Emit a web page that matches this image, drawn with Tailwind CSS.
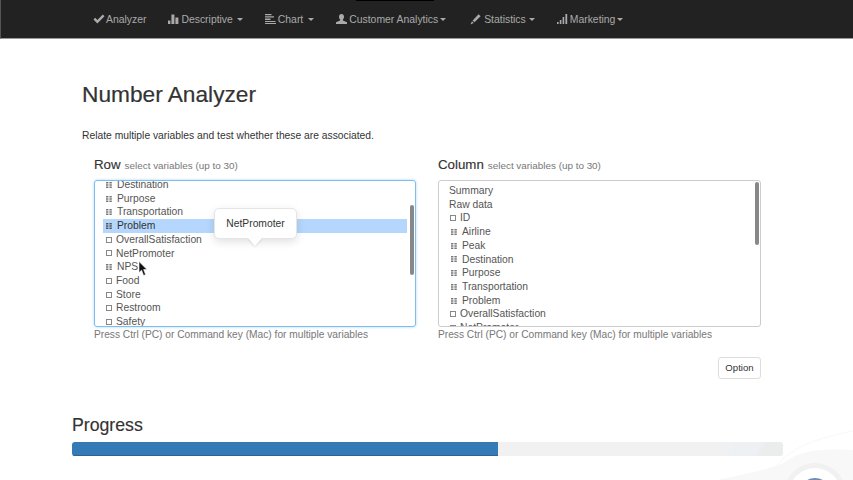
<!DOCTYPE html>
<html lang="en">
<head>
<meta charset="UTF-8">
<title>Number Analyzer</title>
<script src="https://cdn.jsdelivr.net/npm/@tailwindcss/browser@4"></script>
</head>
<body class="relative w-[853px] h-[480px] overflow-hidden bg-white font-['Liberation_Sans',Arial,sans-serif] text-[10.3px] text-[#555]">

<!-- top nav -->
<nav class="relative flex items-center gap-[22px] h-[39px] pl-[92px] pt-[1px] bg-[#222] border-b border-b-[#999] border-l border-l-[#555] text-[10.4px] text-[#aaa]">
  <div class="absolute left-[355px] top-0 w-[78px] h-[1px] bg-black"></div>
  <a class="flex items-center gap-[1px]">
    <svg class="w-[12px] h-[10px]" viewBox="0 0 12 10"><path d="M0.5 5.5 L2.2 3.8 L4.4 6 L9.8 0.6 L11.5 2.3 L4.4 9.4 Z" fill="#aaa"/></svg>
    <span>Analyzer</span>
  </a>
  <a class="flex items-center gap-[2px]">
    <svg class="w-[11px] h-[10px]" viewBox="0 0 11 10"><path d="M0 6.5h2.4V10H0zM3.4 0.5h3V10h-3zM7.4 3.5h3V10h-3z" fill="#aaa"/></svg>
    <span>Descriptive</span>
    <span class="ml-[2px] w-0 h-0 border-x-[3px] border-x-transparent border-t-[3px] border-t-[#aaa]"></span>
  </a>
  <a class="flex items-center gap-[2px]">
    <svg class="w-[11px] h-[10px]" viewBox="0 0 11 10"><path d="M0 0h6.5v1.3H0zM0 2.3h9v1.3H0zM0 4.6h5.5v1.3H0zM0 6.9h10.5v1.2H0zM0 8.9h11V10H0z" fill="#aaa"/></svg>
    <span>Chart</span>
    <span class="ml-[3px] w-0 h-0 border-x-[3px] border-x-transparent border-t-[3px] border-t-[#aaa]"></span>
  </a>
  <a class="flex items-center gap-[2px]">
    <svg class="w-[11px] h-[10px]" viewBox="0 0 11 10"><path d="M5.5 0C7.2 0 8 1.2 8 2.8 8 4.2 7.4 5 6.9 5.6V6.6L11 8.2V10H0V8.2L4.1 6.6V5.6C3.6 5 3 4.2 3 2.8 3 1.2 3.8 0 5.5 0Z" fill="#aaa"/></svg>
    <span>Customer Analytics</span>
    <span class="w-0 h-0 border-x-[3px] border-x-transparent border-t-[3px] border-t-[#aaa]"></span>
  </a>
  <a class="ml-[2px] flex items-center gap-[3px]">
    <svg class="w-[11px] h-[11px]" viewBox="0 0 11 11"><path d="M8.6 0.3 L10.6 2.2 L4.5 8.2 L2.6 6.4 Z M2 7.2 L3.7 8.9 L0.4 10.6 Z" fill="#aaa"/></svg>
    <span>Statistics</span>
    <span class="w-0 h-0 border-x-[3px] border-x-transparent border-t-[3px] border-t-[#aaa]"></span>
  </a>
  <a class="flex items-center gap-[2px]">
    <svg class="w-[11px] h-[10px]" viewBox="0 0 11 10"><path d="M0 8h1.6v2H0zM2.8 6h1.6v4H2.8zM5.6 3h1.6v7H5.6zM8.4 0h1.8v10H8.4z" fill="#aaa"/></svg>
    <span>Marketing</span>
    <span class="w-0 h-0 border-x-[3px] border-x-transparent border-t-[3px] border-t-[#aaa]"></span>
  </a>
</nav>

<main class="pl-[82px] pr-[92px]">
  <h1 class="mt-[42px] text-[22.7px] leading-[26px] text-[#333] [-webkit-text-stroke:0.2px_#333]">Number Analyzer</h1>
  <p class="mt-[22px] leading-[13px] text-[#333]">Relate multiple variables and test whether these are associated.</p>

  <div class="flex gap-[22px] mt-[13px] pl-[12px]">
    <!-- row selector -->
    <section class="w-[322px]">
      <div class="flex items-baseline gap-[4px] h-[16px]">
        <h2 class="text-[13.3px] text-[#333] [-webkit-text-stroke:0.15px_#333]">Row</h2>
        <span class="text-[9.9px] text-[#777]">select variables (up to 30)</span>
      </div>
      <div class="relative mt-[9px] h-[147px] overflow-hidden rounded-[3px] border border-[#7fbdec] shadow-[0_0_3px_#a9d6f5] px-[8px]">
        <ul class="-mt-[3px] leading-[13.72px]">
          <li class="flex items-center h-[13.72px] pl-[3px]"><svg class="w-[6px] h-[6px] mr-[5px]" viewBox="0 0 6 6"><path d="M0 0h2.4v1.4H0zM3.4 0h2.4v1.4H3.4zM0 2.3h2.4v1.4H0zM3.4 2.3h2.4v1.4H3.4zM0 4.6h2.4v1.4H0zM3.4 4.6h2.4v1.4H3.4z" fill="#777"/></svg>Destination</li>
          <li class="flex items-center h-[13.72px] pl-[3px]"><svg class="w-[6px] h-[6px] mr-[5px]" viewBox="0 0 6 6"><path d="M0 0h2.4v1.4H0zM3.4 0h2.4v1.4H3.4zM0 2.3h2.4v1.4H0zM3.4 2.3h2.4v1.4H3.4zM0 4.6h2.4v1.4H0zM3.4 4.6h2.4v1.4H3.4z" fill="#777"/></svg>Purpose</li>
          <li class="flex items-center h-[13.72px] pl-[3px]"><svg class="w-[6px] h-[6px] mr-[5px]" viewBox="0 0 6 6"><path d="M0 0h2.4v1.4H0zM3.4 0h2.4v1.4H3.4zM0 2.3h2.4v1.4H0zM3.4 2.3h2.4v1.4H3.4zM0 4.6h2.4v1.4H0zM3.4 4.6h2.4v1.4H3.4z" fill="#777"/></svg>Transportation</li>
          <li class="flex items-center h-[13.72px] pl-[3px] bg-[#b5d7fd] text-[#333]"><svg class="w-[6px] h-[6px] mr-[5px]" viewBox="0 0 6 6"><path d="M0 0h2.4v1.4H0zM3.4 0h2.4v1.4H3.4zM0 2.3h2.4v1.4H0zM3.4 2.3h2.4v1.4H3.4zM0 4.6h2.4v1.4H0zM3.4 4.6h2.4v1.4H3.4z" fill="#555"/></svg>Problem</li>
          <li class="flex items-center h-[13.72px] pl-[3px]"><span class="w-[6px] h-[6px] mr-[4px] border border-[#888]"></span>OverallSatisfaction</li>
          <li class="flex items-center h-[13.72px] pl-[3px]"><span class="w-[6px] h-[6px] mr-[4px] border border-[#888]"></span>NetPromoter</li>
          <li class="flex items-center h-[13.72px] pl-[3px]"><svg class="w-[6px] h-[6px] mr-[5px]" viewBox="0 0 6 6"><path d="M0 0h2.4v1.4H0zM3.4 0h2.4v1.4H3.4zM0 2.3h2.4v1.4H0zM3.4 2.3h2.4v1.4H3.4zM0 4.6h2.4v1.4H0zM3.4 4.6h2.4v1.4H3.4z" fill="#777"/></svg>NPS</li>
          <li class="flex items-center h-[13.72px] pl-[3px]"><span class="w-[6px] h-[6px] mr-[4px] border border-[#888]"></span>Food</li>
          <li class="flex items-center h-[13.72px] pl-[3px]"><span class="w-[6px] h-[6px] mr-[4px] border border-[#888]"></span>Store</li>
          <li class="flex items-center h-[13.72px] pl-[3px]"><span class="w-[6px] h-[6px] mr-[4px] border border-[#888]"></span>Restroom</li>
          <li class="flex items-center h-[13.72px] pl-[3px]"><span class="w-[6px] h-[6px] mr-[4px] border border-[#888]"></span>Safety</li>
        </ul>
        <div class="absolute right-[1px] top-[24px] w-[4px] h-[70px] rounded-full bg-[#888]"></div>
      </div>
      <p class="mt-[1px] leading-[13px] text-[10.2px] text-[#777]">Press Ctrl (PC) or Command key (Mac) for multiple variables</p>
    </section>

    <!-- column selector -->
    <section class="w-[323px]">
      <div class="flex items-baseline gap-[4px] h-[16px]">
        <h2 class="text-[13.3px] text-[#333] [-webkit-text-stroke:0.15px_#333]">Column</h2>
        <span class="text-[9.9px] text-[#777]">select variables (up to 30)</span>
      </div>
      <div class="relative mt-[9px] h-[147px] overflow-hidden rounded-[3px] border border-[#ccc] pl-[10px] pr-[8px] pt-[3px]">
        <ul class="leading-[13.72px]">
          <li class="flex items-center h-[13.72px]">Summary</li>
          <li class="flex items-center h-[13.72px]">Raw data</li>
          <li class="flex items-center h-[13.72px] pl-[1px]"><span class="w-[6px] h-[6px] mr-[4px] border border-[#888]"></span>ID</li>
          <li class="flex items-center h-[13.72px] pl-[1px]"><svg class="w-[6px] h-[6px] mr-[5px] ml-[1px]" viewBox="0 0 6 6"><path d="M0 0h2.4v1.4H0zM3.4 0h2.4v1.4H3.4zM0 2.3h2.4v1.4H0zM3.4 2.3h2.4v1.4H3.4zM0 4.6h2.4v1.4H0zM3.4 4.6h2.4v1.4H3.4z" fill="#777"/></svg>Airline</li>
          <li class="flex items-center h-[13.72px] pl-[1px]"><svg class="w-[6px] h-[6px] mr-[5px] ml-[1px]" viewBox="0 0 6 6"><path d="M0 0h2.4v1.4H0zM3.4 0h2.4v1.4H3.4zM0 2.3h2.4v1.4H0zM3.4 2.3h2.4v1.4H3.4zM0 4.6h2.4v1.4H0zM3.4 4.6h2.4v1.4H3.4z" fill="#777"/></svg>Peak</li>
          <li class="flex items-center h-[13.72px] pl-[1px]"><svg class="w-[6px] h-[6px] mr-[5px] ml-[1px]" viewBox="0 0 6 6"><path d="M0 0h2.4v1.4H0zM3.4 0h2.4v1.4H3.4zM0 2.3h2.4v1.4H0zM3.4 2.3h2.4v1.4H3.4zM0 4.6h2.4v1.4H0zM3.4 4.6h2.4v1.4H3.4z" fill="#777"/></svg>Destination</li>
          <li class="flex items-center h-[13.72px] pl-[1px]"><svg class="w-[6px] h-[6px] mr-[5px] ml-[1px]" viewBox="0 0 6 6"><path d="M0 0h2.4v1.4H0zM3.4 0h2.4v1.4H3.4zM0 2.3h2.4v1.4H0zM3.4 2.3h2.4v1.4H3.4zM0 4.6h2.4v1.4H0zM3.4 4.6h2.4v1.4H3.4z" fill="#777"/></svg>Purpose</li>
          <li class="flex items-center h-[13.72px] pl-[1px]"><svg class="w-[6px] h-[6px] mr-[5px] ml-[1px]" viewBox="0 0 6 6"><path d="M0 0h2.4v1.4H0zM3.4 0h2.4v1.4H3.4zM0 2.3h2.4v1.4H0zM3.4 2.3h2.4v1.4H3.4zM0 4.6h2.4v1.4H0zM3.4 4.6h2.4v1.4H3.4z" fill="#777"/></svg>Transportation</li>
          <li class="flex items-center h-[13.72px] pl-[1px]"><svg class="w-[6px] h-[6px] mr-[5px] ml-[1px]" viewBox="0 0 6 6"><path d="M0 0h2.4v1.4H0zM3.4 0h2.4v1.4H3.4zM0 2.3h2.4v1.4H0zM3.4 2.3h2.4v1.4H3.4zM0 4.6h2.4v1.4H0zM3.4 4.6h2.4v1.4H3.4z" fill="#777"/></svg>Problem</li>
          <li class="flex items-center h-[13.72px] pl-[1px]"><span class="w-[6px] h-[6px] mr-[4px] border border-[#888]"></span>OverallSatisfaction</li>
          <li class="flex items-center h-[13.72px] pl-[1px]"><span class="w-[6px] h-[6px] mr-[4px] border border-[#888]"></span>NetPromoter</li>
        </ul>
        <div class="absolute right-[1px] top-[1px] w-[4px] h-[63px] rounded-full bg-[#888]"></div>
      </div>
      <p class="mt-[1px] leading-[13px] text-[10.2px] text-[#777]">Press Ctrl (PC) or Command key (Mac) for multiple variables</p>
    </section>
  </div>

  <div class="flex justify-end mt-[16px]">
    <button class="w-[43px] h-[22px] rounded-[3px] border border-[#ddd] bg-white text-[9.6px] text-[#333]">Option</button>
  </div>
</main>

<section class="pl-[72px] w-[783px] mt-[37px]">
  <h2 class="text-[17.7px] leading-[19px] text-[#333] [-webkit-text-stroke:0.15px_#333]">Progress</h2>
  <div class="mt-[7px] flex h-[14px] overflow-hidden rounded-[3px] bg-[linear-gradient(115deg,#f1f1f1_0%,#f1f1f1_91%,#edf1f4_93%,#edf1f4_96%,#ebedec_97%)]">
    <div class="w-[426px] bg-[#337ab7] border-b border-b-[#2a6496]"></div>
  </div>
</section>

<!-- background swoosh, bottom right corner -->
<svg class="absolute left-[700px] top-[420px] w-[153px] h-[60px]" viewBox="0 0 153 60">
  <path d="M73 50C90 28 110 20 153 11" fill="none" stroke="#f8f8f8"/>
  <path d="M17 60C40 55 70 50 85 42 100 30 125 28 153 30V60Z" fill="#f8f8f8"/>
  <circle cx="115" cy="74" r="31" fill="#f1f1f1"/>
  <circle cx="115" cy="74" r="26" fill="#fff"/>
  <circle cx="115" cy="74" r="16" fill="#6d8db3"/>
</svg>

<!-- tooltip over the Row list -->
<div class="absolute left-[214px] top-[208px] flex items-center justify-center w-[83px] h-[31px] rounded-[5px] border border-[#e5e5e5] bg-white text-[#333] shadow-[0_3px_8px_rgba(0,0,0,0.12)]">
  NetPromoter
  <span class="absolute left-[33px] top-[29px] w-0 h-0 border-x-[7px] border-x-transparent border-t-[8px] border-t-white drop-shadow-[0_1px_1px_rgba(0,0,0,0.12)]"></span>
</div>

<!-- mouse cursor -->
<svg class="absolute left-[138px] top-[261px] w-[10px] h-[16px]" viewBox="0 0 10 16"><path d="M1 0.5V11.5L3.6 9.2 5.6 14.5 7.6 13.6 5.6 8.6H9Z" fill="#111" stroke="#fff" stroke-width="0.6"/></svg>

</body>
</html>
